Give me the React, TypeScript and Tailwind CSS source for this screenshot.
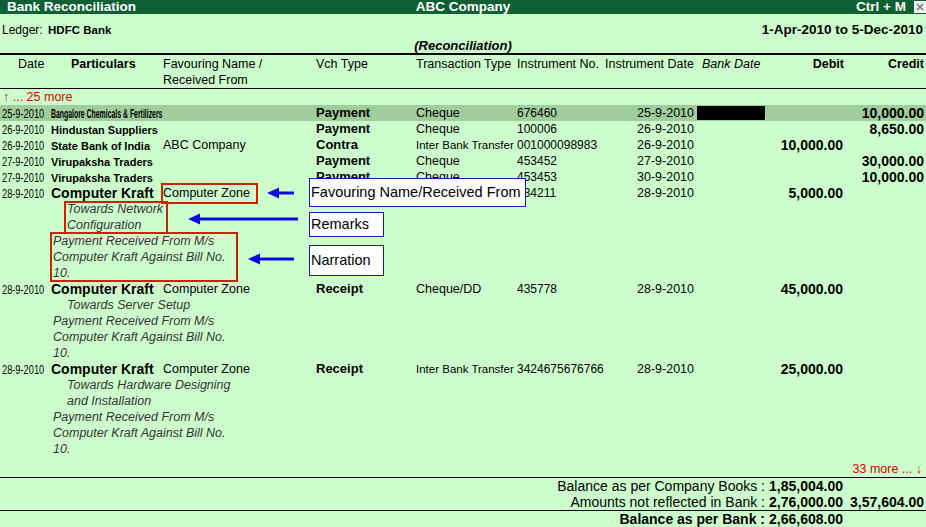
import React from 'react';

type Row = {
  date: string;
  party: string;
  partyStyle: 'cond' | 'std' | 'big';
  favour?: string;
  vch: string;
  txn: string;
  txnSmall?: boolean;
  instNo: string;
  instDate: string;
  masked?: boolean;
  debit?: string;
  credit?: string;
  remarks?: string[];
  narration?: string[];
  hl?: boolean;
};

const narr = ['Payment Received From M/s', 'Computer Kraft Against Bill No.', '10.'];

const rows: Row[] = [
  { date: '25-9-2010', party: 'Bangalore Chemicals & Fertilizers', partyStyle: 'cond', vch: 'Payment', txn: 'Cheque', instNo: '676460', instDate: '25-9-2010', masked: true, credit: '10,000.00', hl: true },
  { date: '26-9-2010', party: 'Hindustan Suppliers', partyStyle: 'std', vch: 'Payment', txn: 'Cheque', instNo: '100006', instDate: '26-9-2010', credit: '8,650.00' },
  { date: '26-9-2010', party: 'State Bank of India', partyStyle: 'std', favour: 'ABC Company', vch: 'Contra', txn: 'Inter Bank Transfer', txnSmall: true, instNo: '001000098983', instDate: '26-9-2010', debit: '10,000.00' },
  { date: '27-9-2010', party: 'Virupaksha Traders', partyStyle: 'std', vch: 'Payment', txn: 'Cheque', instNo: '453452', instDate: '27-9-2010', credit: '30,000.00' },
  { date: '27-9-2010', party: 'Virupaksha Traders', partyStyle: 'std', vch: 'Payment', txn: 'Cheque', instNo: '453453', instDate: '30-9-2010', credit: '10,000.00' },
  { date: '28-9-2010', party: 'Computer Kraft', partyStyle: 'big', favour: 'Computer Zone', vch: 'Receipt', txn: 'Cheque', instNo: '534211', instDate: '28-9-2010', debit: '5,000.00', remarks: ['Towards Network', 'Configuration'], narration: narr },
  { date: '28-9-2010', party: 'Computer Kraft', partyStyle: 'big', favour: 'Computer Zone', vch: 'Receipt', txn: 'Cheque/DD', instNo: '435778', instDate: '28-9-2010', debit: '45,000.00', remarks: ['Towards Server Setup'], narration: narr },
  { date: '28-9-2010', party: 'Computer Kraft', partyStyle: 'big', favour: 'Computer Zone', vch: 'Receipt', txn: 'Inter Bank Transfer', txnSmall: true, instNo: '3424675676766', instDate: '28-9-2010', debit: '25,000.00', remarks: ['Towards Hardware Designing', 'and Installation'], narration: narr },
];

const cols = 'grid grid-cols-[50px_113px_153px_100px_101px_88px_96px_74px_70px_81px] grid-rows-[16px]';

const Arrow = ({ left, top, len }: { left: number; top: number; len: number }) => (
  <svg className="absolute" style={{ left, top }} width={len} height={12} viewBox={`0 0 ${len} 12`}>
    <path d="M0 6 L12 0.5 L12 11.5 Z" fill="#0a0ae0" />
    <rect x={10} y={4.5} width={len - 10} height={3} fill="#0a0ae0" />
  </svg>
);

const Amt = ({ v, pr = 'pr-[2px]' }: { v?: string; pr?: string }) => (
  <div className={`flex justify-end whitespace-nowrap ${pr} text-[14px] font-bold`}>{v}</div>
);

const EntryRow = ({ r }: { r: Row }) => (
  <>
    <div className={`${cols} h-[16px] leading-[16px] whitespace-nowrap ${r.hl ? 'bg-[#9fcd9b]' : ''}`}>
      <div className="pl-[2px]">
        <span className="inline-block origin-left scale-x-[0.74] text-[12.5px]">{r.date}</span>
      </div>
      <div className="pl-[1px]">
        {r.partyStyle === 'cond' && (
          <span className="inline-block origin-left scale-x-[0.53] text-[13px] font-bold">{r.party}</span>
        )}
        {r.partyStyle === 'std' && <span className="text-[11px] font-bold">{r.party}</span>}
        {r.partyStyle === 'big' && <span className="text-[14px] font-bold">{r.party}</span>}
      </div>
      <div className="text-[12.5px]">{r.favour}</div>
      <div className="text-[13px] font-bold">{r.vch}</div>
      <div className={r.txnSmall ? 'text-[11.5px]' : 'text-[12.5px]'}>{r.txn}</div>
      <div className="text-[12px] overflow-hidden">{r.instNo}</div>
      <div className="pl-[32px] text-[12.5px]">{r.instDate}</div>
      <div>
        {r.masked && (
          <div className="-ml-[4px] h-[16px] flex items-center">
            <div className="w-[68px] h-[14px] bg-black" />
            <div className="w-[1px] h-[1px] bg-white mt-[12px]" />
          </div>
        )}
      </div>
      <Amt v={r.debit} />
      <Amt v={r.credit} />
    </div>
    {r.remarks?.map((t, i) => (
      <div key={'r' + i} className="h-[16px] leading-[16px] pl-[67px] text-[12.5px] italic text-[#333]">
        {t}
      </div>
    ))}
    {r.narration?.map((t, i) => (
      <div key={'n' + i} className="h-[16px] leading-[16px] pl-[53px] text-[12.5px] italic text-[#333]">
        {t}
      </div>
    ))}
  </>
);

export default function App() {
  return (
    <div className="relative w-[926px] h-[527px] overflow-hidden bg-[#ccffcc] text-black font-['Liberation_Sans',Arial,sans-serif] flex flex-col">
      {/* title bar */}
      <div className="h-[14px] shrink-0 bg-[#0e5f32] text-white text-[13.5px] font-bold leading-[14px] grid grid-cols-3 items-center">
        <div className="pl-[7px]">Bank Reconciliation</div>
        <div className="text-center">ABC Company</div>
        <div className="flex justify-end items-center">
          <span className="mr-[8px]">Ctrl + M</span>
          <span className="w-[12px] h-[12px] bg-[#f2f2f2] flex items-center justify-center">
            <svg width="8" height="8" viewBox="0 0 8 8">
              <path d="M1 1 L7 7 M7 1 L1 7" stroke="#777" strokeWidth="1.6" />
            </svg>
          </span>
        </div>
      </div>

      {/* ledger / period */}
      <div className="mt-[8px] h-[16px] shrink-0 flex items-center justify-between px-[2px]">
        <div className="text-[12px]">
          Ledger: <span className="ml-[2px] font-bold text-[11.5px]">HDFC Bank</span>
        </div>
        <div className="text-[13.5px] font-bold pr-[1px]">1-Apr-2010 to 5-Dec-2010</div>
      </div>
      <div className="h-[17px] shrink-0 leading-[16px] text-center text-[13px] font-bold italic border-b-2 border-black">
        (Reconciliation)
      </div>

      {/* column headers */}
      <div className="grid grid-cols-[50px_113px_153px_100px_101px_88px_96px_74px_70px_81px] h-[34px] shrink-0 pt-[1px] border-b border-black text-[12.5px] leading-[16px]">
        <div className="pl-[18px]">Date</div>
        <div className="pl-[21px] font-bold">Particulars</div>
        <div>
          Favouring Name /<br />
          Received From
        </div>
        <div>Vch Type</div>
        <div className="whitespace-nowrap">Transaction Type</div>
        <div className="whitespace-nowrap">Instrument No.</div>
        <div className="whitespace-nowrap">Instrument Date</div>
        <div className="pl-[1px] italic">Bank Date</div>
        <div className="text-right pr-[1px] font-bold">Debit</div>
        <div className="text-right pr-[2px] font-bold">Credit</div>
      </div>

      {/* entries */}
      <div className="flex-1 flex flex-col">
        <div className="h-[16px] shrink-0 leading-[16px] pl-[3px] text-[12.5px] text-[#dd0000]">↑ ... 25 more</div>
        {rows.map((r, i) => (
          <EntryRow key={i} r={r} />
        ))}
      </div>

      {/* footer */}
      <div className="h-[16px] shrink-0 leading-[16px] text-right pr-[4px] text-[12.5px] text-[#dd0000]">33 more ... ↓</div>
      <div className="border-t border-black shrink-0">
        <div className={`${cols} h-[16px] leading-[16px]`}>
          <div className="col-span-8 flex justify-end pr-[10px] text-[14px] whitespace-nowrap">Balance as per Company Books :</div>
          <Amt v="1,85,004.00" />
          <div />
        </div>
        <div className={`${cols} h-[16px] leading-[16px]`}>
          <div className="col-span-8 flex justify-end pr-[10px] text-[14px] whitespace-nowrap">Amounts not reflected in Bank :</div>
          <Amt v="2,76,000.00" />
          <Amt v="3,57,604.00" />
        </div>
      </div>
      <div className={`${cols} h-[17px] shrink-0 leading-[17px] border-t border-black`}>
        <div className="col-span-8 flex justify-end pr-[10px] text-[14px] font-bold whitespace-nowrap">Balance as per Bank :</div>
        <Amt v="2,66,608.00" />
        <div />
      </div>

      {/* annotation overlays */}
      <div className="absolute left-[161px] top-[183px] w-[97px] h-[21px] border-2 border-[#cc2200]" />
      <div className="absolute left-[64px] top-[201px] w-[104px] h-[33px] border-2 border-[#cc2200]" />
      <div className="absolute left-[50px] top-[232px] w-[188px] h-[50px] border-2 border-[#cc2200]" />

      <Arrow left={267} top={187} len={27} />
      <Arrow left={188} top={213} len={110} />
      <Arrow left={248} top={253} len={46} />

      <div className="absolute left-[309px] top-[178px] w-[217px] h-[29px] bg-white border border-[#1a1aa8] pl-[1px] text-[14.5px] leading-[27px] whitespace-nowrap">
        Favouring Name/Received From
      </div>
      <div className="absolute left-[309px] top-[212px] w-[75px] h-[25px] bg-white border border-[#1a1aa8] pl-[1px] text-[14.5px] leading-[23px]">
        Remarks
      </div>
      <div className="absolute left-[309px] top-[245px] w-[75px] h-[31px] bg-white border border-[#1a1aa8] pl-[1px] text-[14.5px] leading-[29px]">
        Narration
      </div>
    </div>
  );
}
